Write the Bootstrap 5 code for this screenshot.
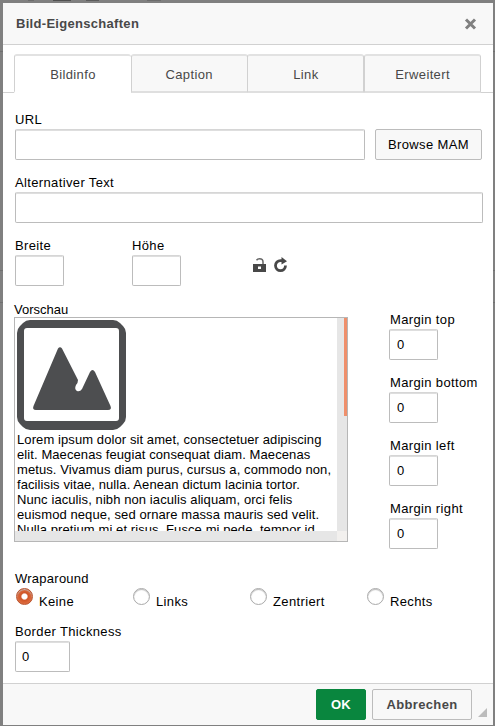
<!DOCTYPE html>
<html lang="de">
<head>
<meta charset="utf-8">
<meta name="viewport" content="width=device-width, initial-scale=1">
<title>Bild-Eigenschaften</title>
<link href="https://cdn.jsdelivr.net/npm/bootstrap@5.3.0/dist/css/bootstrap.min.css" rel="stylesheet">
<style>
body{font-family:"Liberation Sans",Arial,sans-serif;font-size:13px;line-height:18px;letter-spacing:.36px;color:#000;width:495px;height:726px;overflow:hidden;padding:3px 2px 1px 3px;
 background:linear-gradient(#505050,#505050) 53px 0/18px 1px no-repeat,linear-gradient(#5c5c5c,#5c5c5c) 86px 0/13px 1px no-repeat,linear-gradient(#6c6c6c,#6c6c6c) 28px 0/6px 1px no-repeat,linear-gradient(#6c6c6c,#6c6c6c) 147px 0/14px 1px no-repeat,linear-gradient(#707070,#707070) 0 51px/495px 1px no-repeat,linear-gradient(#707070,#707070) 0 270px/495px 1px no-repeat,linear-gradient(#707070,#707070) 0 302px/495px 1px no-repeat,#808080}
.dlg{height:722px;background:#fff}
.dlg-head{height:42px;background:#f8f8f8;border-bottom:1px solid #d1d1d1;padding:0 16px 0 13px;color:#484848;font-weight:bold;letter-spacing:.3px}
.dlg-tabs{height:48px;padding-top:9px}
.dlg-tabs::before,.dlg-tabs::after{content:"";border-bottom:1px solid #d1d1d1;width:11px}
.dlg-tabs::after{flex:1}
.dlg-tabs .nav-link{width:117px;height:39px;padding:0;line-height:40px;text-align:center;color:#484848;background:#f8f8f8;border:1px solid #d1d1d1;border-bottom:2px solid #dfdfdf;border-top:2px solid #e2e2e2;border-radius:3px 3px 0 0;margin:0 0 0 -.3px;line-height:38px}
.dlg-tabs .nav-link.active{background:#fff;border-bottom-color:#fff;border-right-width:0;color:#484848;margin:0}
.dlg-body{height:590px;padding:18px 10px 0 12px}
.fld{margin-bottom:14px}
.fld label{display:block;height:18px;white-space:nowrap}
.dlg .form-control{height:31px;padding:0 6px;font-size:13px;letter-spacing:.36px;color:#000;border:1px solid #bcbcbc;border-top-color:#d6d6d6;border-radius:2px;box-shadow:inset 0 1px 0 #dedede}
.dlg .w-s{width:49px}
.dlg .w-m{width:55px}
.dlg .btn{height:31px;padding:0;font-size:13px;line-height:29px;letter-spacing:.36px;border-radius:2px}
.dlg .btn-mam{width:107px;margin:0 1px 0 10px;background:#f8f8f8;border:1px solid #bcbcbc;color:#000}
.fw,.fh{width:117px}
.lk{margin:21px 8px 0 4px}
.rf{margin-top:20px}
.mid{margin-top:2px}
.prev-col{width:334px;margin-left:-1px}
.prev-title{line-height:15px;letter-spacing:0}
.prev{height:225px;border:1px solid #b6b6b6;letter-spacing:.09px;line-height:15px;display:grid;grid-template:213px 10px/322px 10px}
.prev-text{padding:2px 0 0 2px;overflow:hidden;white-space:nowrap}
.prev-text svg{display:block;margin-bottom:2px}
.sb-v{background:#e6e6e6}
.sb-v div{width:3px;height:98px;margin-left:7px;background:#ef8f6b}
.sb-h{background:#e6e6e6}
.sb-c{background:#f2f0ee}
.mg-col{margin:9px 0 0 42px}
.mg-col .form-control{margin-left:-1px}
.dlg .mg-col .form-control{padding-left:7px}
.wrap-title{margin-top:21px;letter-spacing:.25px}
.opts>label{width:117px;height:23px}
.dlg .form-check-input{width:17px;height:17px;margin:0 6px 0 1px;border:1px solid #aaa;background:#fff;box-shadow:inset 0 1px 1px #bbb;flex:none}
.dlg .form-check-input:checked{border-color:#b9532f;background:radial-gradient(circle,#fff 0 2.5px,#cf5528 3.7px,#dd6a3c 7px)}
.opts span{padding-top:5px}
.bt{margin-top:12px}
.dlg-foot{height:42px;background:#f8f8f8;border-top:1px solid #d1d1d1;padding-top:5px}
.btn-ok{width:50px;background:#09863e;color:#fff;border:1px solid #09863e;margin-right:6px}
.btn-no{width:100px;background:#f8f8f8;color:#484848;border:1px solid #bcbcbc}
.grip{margin:19px 6px 0 6px}
</style>
<script src="https://cdn.jsdelivr.net/npm/bootstrap@5.3.0/dist/js/bootstrap.bundle.min.js"></script>
</head>
<body>
<div class="dlg">
 <div class="dlg-head d-flex align-items-center justify-content-between"><span>Bild-Eigenschaften</span>
  <svg width="13" height="12" viewBox="0 0 13 12"><path d="M2 1.500 11 10.500M11 1.500 2 10.500" stroke="#808080" stroke-width="3"/></svg></div>
 <nav class="dlg-tabs nav d-flex flex-nowrap">
  <a class="nav-link active">Bildinfo</a><a class="nav-link">Caption</a><a class="nav-link">Link</a><a class="nav-link">Erweitert</a>
 </nav>
 <div class="dlg-body">
  <div class="fld"><label for="url">URL</label>
   <div class="d-flex"><input id="url" class="form-control flex-fill w-auto"><button class="btn btn-mam flex-shrink-0" type="button">Browse MAM</button></div></div>
  <div class="fld"><label for="alt">Alternativer Text</label><input id="alt" class="form-control"></div>
  <div class="d-flex">
   <div class="fld fw"><label for="br">Breite</label><input id="br" class="form-control w-s"></div>
   <div class="fld fh"><label for="ho">Höhe</label><input id="ho" class="form-control w-s"></div>
   <svg class="lk" width="13" height="14" viewBox="0 0 13 14"><path d="M0 6h13v8H0z" fill="#484848"/><path d="M3.500 2.200Q4.500.8 6.500.8 10 .8 10 4v2" fill="none" stroke="#666" stroke-width="1.500"/><path d="M5 8.500h3V11H5z" fill="#fff"/></svg>
   <svg class="rf" width="14" height="15" viewBox="0 0 14 15"><path d="M8.500 3.600H6.500A5 5 0 1 0 11.500 8.600" fill="none" stroke="#484848" stroke-width="2.800"/><path d="M7.500 0 13 4.200 7.500 7.500z" fill="#484848"/></svg>
  </div>
  <div class="d-flex mid">
   <div class="prev-col"><div class="prev-title">Vorschau</div>
    <div class="prev">
     <div class="prev-text"><svg width="109" height="110" viewBox="0 0 109 110"><path fill-rule="evenodd" d="M13 0H96Q100 0 103 3L106 6Q109 9 109 13V97Q109 101 106 104L103 107Q100 110 96 110H13Q9 110 6 107L3 104Q0 101 0 97V13Q0 9 3 6L6 3Q9 0 13 0zM10 8Q7 8 7 11V98Q7 101 10 101H99Q102 101 102 98V11Q102 8 99 8z" fill="#4d4e50"/><path d="M41 28.500Q43 26 45 28.500L61 60Q61 63 59 65 57 69 60 71 63 72 65 69L73 52Q75.500 48 78 52L93.500 86Q95 90 91 90H19Q15 90 16.500 86z" fill="#4d4e50"/></svg>Lorem ipsum dolor sit amet, consectetuer adipiscing<br>elit. Maecenas feugiat consequat diam. Maecenas<br>metus. Vivamus diam purus, cursus a, commodo non,<br>facilisis vitae, nulla. Aenean dictum lacinia tortor.<br>Nunc iaculis, nibh non iaculis aliquam, orci felis<br>euismod neque, sed ornare massa mauris sed velit.<br>Nulla pretium mi et risus. Fusce mi pede, tempor id</div>
     <div class="sb-v"><div></div></div><div class="sb-h"></div><div class="sb-c"></div>
    </div></div>
   <div class="mg-col">
    <div class="fld"><label for="mt">Margin top</label><input id="mt" class="form-control w-s" value="0"></div>
    <div class="fld"><label for="mb">Margin bottom</label><input id="mb" class="form-control w-s" value="0"></div>
    <div class="fld"><label for="ml">Margin left</label><input id="ml" class="form-control w-s" value="0"></div>
    <div class="fld mb-0"><label for="mr">Margin right</label><input id="mr" class="form-control w-s" value="0"></div>
   </div>
  </div>
  <div class="wrap-title">Wraparound</div>
  <div class="opts d-flex">
   <label class="d-flex"><input class="form-check-input" type="radio" name="w" checked><span>Keine</span></label>
   <label class="d-flex"><input class="form-check-input" type="radio" name="w"><span>Links</span></label>
   <label class="d-flex"><input class="form-check-input" type="radio" name="w"><span>Zentriert</span></label>
   <label class="d-flex"><input class="form-check-input" type="radio" name="w"><span>Rechts</span></label>
  </div>
  <div class="fld bt"><label for="bt">Border Thickness</label><input id="bt" class="form-control w-m" value="0"></div>
 </div>
 <div class="dlg-foot d-flex justify-content-end"><button class="btn btn-ok fw-bold" type="button">OK</button><button class="btn btn-no fw-bold" type="button">Abbrechen</button>
  <svg class="grip" width="9" height="9" viewBox="0 0 9 9"><path d="M9 0V9H0z" fill="#bcbcbc"/></svg></div>
</div>
</body>
</html>
